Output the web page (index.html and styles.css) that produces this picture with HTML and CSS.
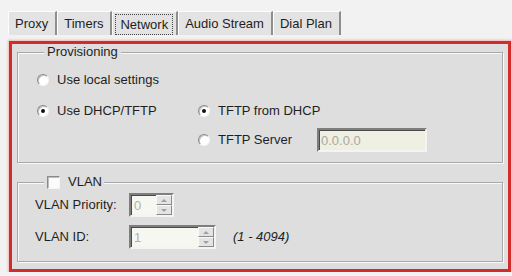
FILE: index.html
```html
<!DOCTYPE html>
<html>
<head>
<meta charset="utf-8">
<link rel="stylesheet" href="styles.css">
</head>
<body>
<div class="tabs">
  <div class="tab">Proxy</div>
  <div class="tab">Timers</div>
  <div class="tab active"><span class="focus">Network</span></div>
  <div class="tab">Audio Stream</div>
  <div class="tab">Dial Plan</div>
</div>
<div class="page">
  <fieldset class="group prov">
    <legend>Provisioning</legend>
    <div class="prov-grid">
      <label class="opt wide"><span class="radio"></span>Use local settings</label>
      <label class="opt"><span class="radio on"></span>Use DHCP/TFTP</label>
      <label class="opt"><span class="radio on"></span>TFTP from DHCP</label>
      <span class="empty"></span>
      <span class="empty"></span>
      <label class="opt"><span class="radio"></span>TFTP Server</label>
      <div class="field ip">0.0.0.0</div>
    </div>
  </fieldset>
  <fieldset class="group vlan">
    <legend><span class="check"></span>VLAN</legend>
    <div class="vlan-grid">
      <span class="lbl">VLAN Priority:</span>
      <div class="spin short"><span class="val">0</span><span class="btns"><span class="btn"><span class="arr up"></span></span><span class="btn"><span class="arr dn"></span></span></span></div>
      <span class="empty"></span>
      <span class="lbl">VLAN ID:</span>
      <div class="spin long"><span class="val">1</span><span class="btns"><span class="btn"><span class="arr up"></span></span><span class="btn"><span class="arr dn"></span></span></span></div>
      <span class="range">(1 - 4094)</span>
    </div>
  </fieldset>
</div>
</body>
</html>
```
FILE: styles.css
```css
* { box-sizing: border-box; }
body {
  margin: 0;
  background: #f2f2f2;
  font: 13px/16px "Liberation Sans", Arial, sans-serif;
  color: #1e1e1e;
}
.tabs {
  display: flex;
  margin: 11px 0 0 8px;
  height: 24px;
}
.tab {
  padding: 0 7px 0 6px;
  line-height: 23px;
  background: #e3e3e3;
  border-top: 1px solid #fdfdfd;
  border-left: 1px solid #fdfdfd;
  border-right: 2px solid #8e8e8e;
}
.tab.active {
  padding: 1px 3px 0 2px;
  display: flex;
  align-items: center;
}
.focus {
  border: 1px dotted #444;
  padding: 2px 4px 1px;
  line-height: 16px;
}
.page {
  margin: 6px 1px 0 9px;
  height: 231px;
  border: 3px solid #d12b2b;
  box-shadow: 0 0 2px 1px rgba(235, 130, 130, 0.55);
  background: #dedede;
  padding: 1px 5px 0 5px;
}
.group {
  margin: 0;
  min-width: 0;
  border: 1px solid #a8a8a8;
  box-shadow: inset 1px 1px 0 #f9f9f9, 1px 1px 0 #f9f9f9;
}
.group legend {
  margin-left: 7px;
  padding: 0 3px;
  line-height: 14px;
  background: #dedede;
  display: flex;
  align-items: center;
}
.prov {
  padding: 19px 0 10px 19px;
}
.prov-grid {
  display: grid;
  grid-template-columns: 161px 119px 110px;
  grid-template-rows: 16px 16px 24px;
  row-gap: 9px;
  align-items: center;
}
.wide { grid-column: 1 / 4; margin-bottom: 13px; }
.opt {
  display: flex;
  align-items: center;
  white-space: nowrap;
}
.radio {
  width: 12px;
  height: 12px;
  border-radius: 50%;
  background: #fff;
  border: 1px solid;
  border-color: #8a8a8a #f4f4f4 #f4f4f4 #8a8a8a;
  box-shadow: inset 1px 1px 0 #c4c4c4;
  margin-right: 8px;
  display: flex;
  align-items: center;
  justify-content: center;
  flex: none;
}
.radio.on::after {
  content: "";
  width: 4px;
  height: 4px;
  border-radius: 50%;
  background: #111;
}
.field {
  height: 24px;
  background: #efefe2;
  border: 2px solid;
  border-color: #7e7e7e #f4f4f4 #f4f4f4 #7e7e7e;
  box-shadow: inset 1px 1px 0 #4a4a4a;
  color: #a9a9a0;
  padding: 2px 2px;
  line-height: 18px;
}
.vlan {
  margin-top: 12px;
  padding: 4px 0 12px 17px;
}
.vlan legend {
  margin-left: 9px;
  padding: 0 2px 0 3px;
}
.check {
  width: 13px;
  height: 13px;
  background: #fbfbfb;
  border: 1px solid;
  border-color: #8a8a8a #f4f4f4 #f4f4f4 #8a8a8a;
  box-shadow: inset 1px 1px 0 #bdbdbd;
  margin-right: 8px;
}
.vlan-grid {
  display: grid;
  grid-template-columns: 94px auto 1fr;
  grid-template-rows: 24px 24px;
  row-gap: 8px;
  align-items: center;
}
.lbl { white-space: nowrap; }
.spin {
  height: 24px;
  display: flex;
  background: #f7f7f1;
  border: 2px solid;
  border-color: #7e7e7e #f4f4f4 #f4f4f4 #7e7e7e;
  box-shadow: inset 1px 1px 0 #4a4a4a;
}
.spin.short { width: 45px; }
.spin.long { width: 87px; }
.val {
  flex: 1;
  color: #b0b0a8;
  padding: 2px 3px;
  line-height: 18px;
}
.btns {
  width: 16px;
  display: flex;
  flex-direction: column;
}
.btn {
  flex: 1;
  background: #e4e4e4;
  border: 1px solid;
  border-color: #fafafa #8a8a8a #8a8a8a #fafafa;
  display: flex;
  align-items: center;
  justify-content: center;
}
.arr {
  width: 0;
  height: 0;
  border-left: 3px solid transparent;
  border-right: 3px solid transparent;
}
.arr.up { border-bottom: 3px solid #a0a0a0; }
.arr.dn { border-top: 3px solid #a0a0a0; }
.range {
  font-style: italic;
  margin-left: 17px;
  white-space: nowrap;
}
```
